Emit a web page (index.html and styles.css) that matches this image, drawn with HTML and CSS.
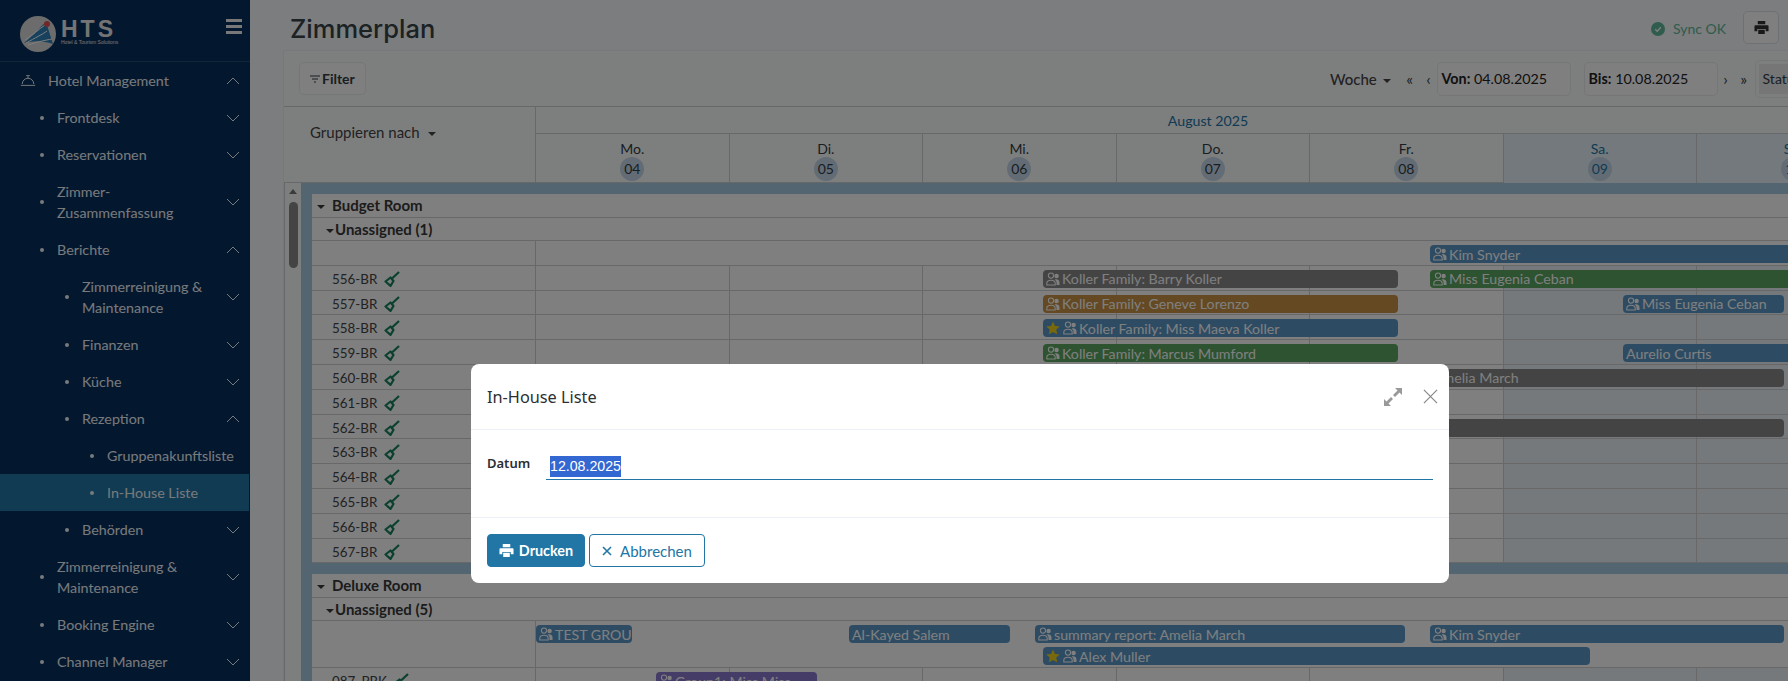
FILE: index.html
```html
<!DOCTYPE html>
<html lang="de">
<head>
    <meta charset="utf-8">
    <title>Zimmerplan</title>
    <link rel="stylesheet" href="styles.css">
</head>
<body>
    <svg class="icon-defs" width="0" height="0">
        <symbol id="chev-down" viewBox="0 0 14 8"><path d="M1 1l6 6 6-6" fill="none" stroke="currentColor"/></symbol>
        <symbol id="chev-up" viewBox="0 0 14 8"><path d="M1 7l6-6 6 6" fill="none" stroke="currentColor"/></symbol>
        <symbol id="guests" viewBox="0 0 14 14"><circle cx="5" cy="3.6" r="2.6" fill="none" stroke="currentColor" stroke-width="1.1"/><circle cx="10.6" cy="4" r="2.2" fill="currentColor"/><path d="M.8 13v-1.6C.8 9.400 2.400 8.200 5 8.200s4.200 1.200 4.200 3.200V13z" fill="none" stroke="currentColor" stroke-width="1.1"/><path d="M8.600 7.400c2.700-.5 4.900.6 4.900 3V13h-3v-2.500c0-1.200-.7-2.300-1.900-3.100z" fill="currentColor"/></symbol>
        <symbol id="star" viewBox="0 0 14 14"><path d="M7 .5l2 4.400 4.800.5-3.600 3.200 1 4.700L7 10.900l-4.200 2.400 1-4.700L.2 5.400 5 4.900z" fill="currentColor"/></symbol>
        <symbol id="broom" viewBox="0 0 16 16"><path d="M1.500 10.500l5-4 3 3.500-3 4.800z" fill="none" stroke="currentColor" stroke-width="2.200" stroke-linejoin="round"/><path d="M8 7.500L15 1" fill="none" stroke="currentColor" stroke-width="2.200"/></symbol>
        <symbol id="printer" viewBox="0 0 16 16"><path d="M4 1h8v3.500H4zM1.500 5.500h13a1 1 0 0 1 1 1V12h-3V9.500h-9V12h-3V6.500a1 1 0 0 1 1-1zM4.500 10.500h7V15h-7z" fill="currentColor"/></symbol>
    </svg>

    <div class="app">
        <!-- Sidebar -->
        <aside class="sidebar">
            <div class="brand">
                <svg class="brand-mark" viewBox="0 0 36 36">
                    <circle cx="18" cy="18" r="18" fill="#d8d8d8"/>
                    <path d="M4 27C14 19 20 11 26 6l7 22C22 24 12 25 4 27z" fill="#2f83b8"/>
                    <path d="M5 24C13 19 19 13 25 9M6 27c9-5 17-9 21-12M8 29c9-3 18-5 24-6" fill="none" stroke="#fff" stroke-width="1"/>
                    <circle cx="27" cy="8" r="3" fill="#e05050"/>
                </svg>
                <div class="brand-text">
                    <div class="brand-name">HTS</div>
                    <div class="brand-tag">Hotel &amp; Tourism Solutions</div>
                </div>
                <div class="burger"><span></span><span></span><span></span></div>
            </div>
            <nav class="nav">
                <div class="nav-item nav-top">
                    <svg class="bell" viewBox="0 0 18 14"><path d="M2.500 11a6.500 6.500 0 0 1 13 0M1 12.500h16M9 4.500V2M7 1.500h4" fill="none" stroke="currentColor" stroke-width="1.100"/></svg>
                    <span class="nav-label">Hotel Management</span>
                    <svg class="chev"><use href="#chev-up"/></svg>
                </div>
                <div class="nav-item lvl-1"><i class="dot"></i><span class="nav-label">Frontdesk</span><svg class="chev"><use href="#chev-down"/></svg></div>
                <div class="nav-item lvl-1"><i class="dot"></i><span class="nav-label">Reservationen</span><svg class="chev"><use href="#chev-down"/></svg></div>
                <div class="nav-item lvl-1"><i class="dot"></i><span class="nav-label">Zimmer-<br>Zusammenfassung</span><svg class="chev"><use href="#chev-down"/></svg></div>
                <div class="nav-item lvl-1"><i class="dot"></i><span class="nav-label">Berichte</span><svg class="chev"><use href="#chev-up"/></svg></div>
                <div class="nav-item lvl-2"><i class="dot"></i><span class="nav-label">Zimmerreinigung &amp;<br>Maintenance</span><svg class="chev"><use href="#chev-down"/></svg></div>
                <div class="nav-item lvl-2"><i class="dot"></i><span class="nav-label">Finanzen</span><svg class="chev"><use href="#chev-down"/></svg></div>
                <div class="nav-item lvl-2"><i class="dot"></i><span class="nav-label">Küche</span><svg class="chev"><use href="#chev-down"/></svg></div>
                <div class="nav-item lvl-2"><i class="dot"></i><span class="nav-label">Rezeption</span><svg class="chev"><use href="#chev-up"/></svg></div>
                <div class="nav-item lvl-3"><i class="dot"></i><span class="nav-label">Gruppenakunftsliste</span></div>
                <div class="nav-item lvl-3 active"><i class="dot"></i><span class="nav-label">In-House Liste</span></div>
                <div class="nav-item lvl-2"><i class="dot"></i><span class="nav-label">Behörden</span><svg class="chev"><use href="#chev-down"/></svg></div>
                <div class="nav-item lvl-1"><i class="dot"></i><span class="nav-label">Zimmerreinigung &amp;<br>Maintenance</span><svg class="chev"><use href="#chev-down"/></svg></div>
                <div class="nav-item lvl-1"><i class="dot"></i><span class="nav-label">Booking Engine</span><svg class="chev"><use href="#chev-down"/></svg></div>
                <div class="nav-item lvl-1"><i class="dot"></i><span class="nav-label">Channel Manager</span><svg class="chev"><use href="#chev-down"/></svg></div>
            </nav>
        </aside>

        <main class="main">
            <div class="page-head">
                <h1>Zimmerplan</h1>
                <div class="sync">
                    <svg class="sync-check" viewBox="0 0 14 14"><circle cx="7" cy="7" r="7" fill="#5fb89a"/><path d="M4.200 7.200l2 2 3.600-4" fill="none" stroke="#fff" stroke-width="1.300"/></svg>
                    <span>Sync OK</span>
                </div>
                <button class="print-btn"><svg><use href="#printer"/></svg></button>
            </div>

            <div class="card">
                <div class="toolbar">
                    <button class="filter-btn">
                        <svg class="filter-icon" viewBox="0 0 10 8"><path d="M0 1h10M2 4h6M4 7h2" stroke="currentColor" fill="none"/></svg>
                        Filter
                    </button>
                    <div class="range">
                        <span class="view-select">Woche <i class="caret"></i></span>
                        <span class="step step-first">«</span>
                        <span class="step">‹</span>
                        <div class="date-box"><b>Von:</b> 04.08.2025</div>
                        <div class="date-box date-to"><b>Bis:</b> 10.08.2025</div>
                        <span class="step step-next">›</span>
                        <span class="step">»</span>
                        <div class="status-box"><span>Status</span></div>
                    </div>
                </div>

                <div class="plan-head">
                    <div class="group-by">Gruppieren nach <i class="caret"></i></div>
                    <div class="dates">
                        <div class="month"><span>August 2025</span></div>
                        <div class="days">
                            <div class="day"><span>Mo.</span><em>04</em></div>
                            <div class="day"><span>Di.</span><em>05</em></div>
                            <div class="day"><span>Mi.</span><em>06</em></div>
                            <div class="day"><span>Do.</span><em>07</em></div>
                            <div class="day"><span>Fr.</span><em>08</em></div>
                            <div class="day weekend"><span>Sa.</span><em>09</em></div>
                            <div class="day weekend"><span>So.</span><em>10</em></div>
                        </div>
                    </div>
                </div>

                <div class="plan-body">
                    <div class="scroll-track">
                        <i class="scroll-arrow"></i>
                        <i class="scroll-thumb"></i>
                    </div>
                    <div class="groups">
                        <section class="room-group">
                            <div class="group-title"><i class="caret"></i>Budget Room</div>
                            <div class="sub-title"><i class="caret"></i>Unassigned (1)</div>
                            <div class="row">
                                <div class="room"></div>
                                <div class="timeline">
                                    <div class="event blue" style="left:894px;width:400px"><svg><use href="#guests"/></svg>Kim Snyder</div>
                                </div>
                            </div>
                            <div class="row">
                                <div class="room">556-BR <svg class="broom"><use href="#broom"/></svg></div>
                                <div class="timeline days-grid">
                                    <i></i><i></i><i></i><i></i><i></i><i class="we"></i><i class="we"></i>
                                    <div class="event grey" style="left:507px;width:355px"><svg><use href="#guests"/></svg>Koller Family: Barry Koller</div>
                                    <div class="event green" style="left:894px;width:400px"><svg><use href="#guests"/></svg>Miss Eugenia Ceban</div>
                                </div>
                            </div>
                            <div class="row">
                                <div class="room">557-BR <svg class="broom"><use href="#broom"/></svg></div>
                                <div class="timeline days-grid">
                                    <i></i><i></i><i></i><i></i><i></i><i class="we"></i><i class="we"></i>
                                    <div class="event orange" style="left:507px;width:355px"><svg><use href="#guests"/></svg>Koller Family: Geneve Lorenzo</div>
                                    <div class="event blue" style="left:1087px;width:161px"><svg><use href="#guests"/></svg>Miss Eugenia Ceban</div>
                                </div>
                            </div>
                            <div class="row">
                                <div class="room">558-BR <svg class="broom"><use href="#broom"/></svg></div>
                                <div class="timeline days-grid">
                                    <i></i><i></i><i></i><i></i><i></i><i class="we"></i><i class="we"></i>
                                    <div class="event blue" style="left:507px;width:355px"><svg class="vip"><use href="#star"/></svg><svg><use href="#guests"/></svg>Koller Family: Miss Maeva Koller</div>
                                </div>
                            </div>
                            <div class="row">
                                <div class="room">559-BR <svg class="broom"><use href="#broom"/></svg></div>
                                <div class="timeline days-grid">
                                    <i></i><i></i><i></i><i></i><i></i><i class="we"></i><i class="we"></i>
                                    <div class="event green" style="left:507px;width:355px"><svg><use href="#guests"/></svg>Koller Family: Marcus Mumford</div>
                                    <div class="event blue" style="left:1087px;width:300px">Aurelio Curtis</div>
                                </div>
                            </div>
                            <div class="row">
                                <div class="room">560-BR <svg class="broom"><use href="#broom"/></svg></div>
                                <div class="timeline days-grid">
                                    <i></i><i></i><i></i><i></i><i></i><i class="we"></i><i class="we"></i>
                                    <div class="event grey" style="left:894px;width:354px">Amelia March</div>
                                </div>
                            </div>
                            <div class="row">
                                <div class="room">561-BR <svg class="broom"><use href="#broom"/></svg></div>
                                <div class="timeline days-grid"><i></i><i></i><i></i><i></i><i></i><i class="we"></i><i class="we"></i></div>
                            </div>
                            <div class="row">
                                <div class="room">562-BR <svg class="broom"><use href="#broom"/></svg></div>
                                <div class="timeline days-grid">
                                    <i></i><i></i><i></i><i></i><i></i><i class="we"></i><i class="we"></i>
                                    <div class="event grey" style="left:700px;width:548px"></div>
                                </div>
                            </div>
                            <div class="row">
                                <div class="room">563-BR <svg class="broom"><use href="#broom"/></svg></div>
                                <div class="timeline days-grid"><i></i><i></i><i></i><i></i><i></i><i class="we"></i><i class="we"></i></div>
                            </div>
                            <div class="row">
                                <div class="room">564-BR <svg class="broom"><use href="#broom"/></svg></div>
                                <div class="timeline days-grid"><i></i><i></i><i></i><i></i><i></i><i class="we"></i><i class="we"></i></div>
                            </div>
                            <div class="row">
                                <div class="room">565-BR <svg class="broom"><use href="#broom"/></svg></div>
                                <div class="timeline days-grid"><i></i><i></i><i></i><i></i><i></i><i class="we"></i><i class="we"></i></div>
                            </div>
                            <div class="row">
                                <div class="room">566-BR <svg class="broom"><use href="#broom"/></svg></div>
                                <div class="timeline days-grid"><i></i><i></i><i></i><i></i><i></i><i class="we"></i><i class="we"></i></div>
                            </div>
                            <div class="row">
                                <div class="room">567-BR <svg class="broom"><use href="#broom"/></svg></div>
                                <div class="timeline days-grid"><i></i><i></i><i></i><i></i><i></i><i class="we"></i><i class="we"></i></div>
                            </div>
                        </section>

                        <section class="room-group">
                            <div class="group-title"><i class="caret"></i>Deluxe Room</div>
                            <div class="sub-title"><i class="caret"></i>Unassigned (5)</div>
                            <div class="row row-double">
                                <div class="room"></div>
                                <div class="timeline">
                                    <div class="event blue" style="left:0;width:96px"><svg><use href="#guests"/></svg>TEST GROUP</div>
                                    <div class="event blue" style="left:313px;width:161px">Al-Kayed Salem</div>
                                    <div class="event blue" style="left:499px;width:370px"><svg><use href="#guests"/></svg>summary report: Amelia March</div>
                                    <div class="event blue" style="left:894px;width:354px"><svg><use href="#guests"/></svg>Kim Snyder</div>
                                    <div class="event blue lower" style="left:507px;width:547px"><svg class="vip"><use href="#star"/></svg><svg><use href="#guests"/></svg>Alex Muller</div>
                                </div>
                            </div>
                            <div class="row">
                                <div class="room">087_PRK <svg class="broom"><use href="#broom"/></svg></div>
                                <div class="timeline days-grid">
                                    <i></i><i></i><i></i><i></i><i></i><i class="we"></i><i class="we"></i>
                                    <div class="event purple" style="left:120px;width:161px"><svg><use href="#guests"/></svg>Group1: Miss Miss</div>
                                </div>
                            </div>
                        </section>
                    </div>
                </div>
            </div>
        </main>
    </div>

    <!-- In-House Liste dialog -->
    <div class="backdrop">
        <div class="modal">
            <div class="modal-head">
                <h2>In-House Liste</h2>
                <svg class="modal-expand" viewBox="0 0 20 20"><path d="M12 1h7v7l-2.500-2.500L12 10 10 8l4.500-4.500zM8 19H1v-7l2.500 2.500L8 10l2 2-4.500 4.500z" fill="currentColor"/></svg>
                <svg class="modal-close" viewBox="0 0 16 16"><path d="M1 1l14 14M15 1L1 15" fill="none" stroke="currentColor" stroke-width="1.300"/></svg>
            </div>
            <div class="modal-body">
                <label class="field-label">Datum</label>
                <div class="field-input"><span class="selected">12.08.2025</span></div>
            </div>
            <div class="modal-foot">
                <button class="btn-primary"><svg><use href="#printer"/></svg>Drucken</button>
                <button class="btn-outline"><svg viewBox="0 0 10 10"><path d="M1 1l8 8M9 1L1 9" fill="none" stroke="currentColor" stroke-width="1.600"/></svg>Abbrechen</button>
            </div>
        </div>
    </div>
</body>
</html>
```

FILE: styles.css
```css
* {
    box-sizing: border-box;
}
html, body {
    height: 100%;
}
body {
    margin: 0;
    overflow: hidden;
    background-color: #f6fafd;
    color: #333c44;
    font-family: Lato, Roboto, sans-serif;
    font-size: 14px;
}
button {
    font-family: inherit;
    cursor: pointer;
}
.icon-defs {
    position: absolute;
}
.app {
    display: flex;
    height: 100vh;
    overflow: hidden;
}

/* Sidebar */
.sidebar {
    flex: 0 0 250px;
    background-color: #062f5e;
    color: #f0f4f8;
    font-size: 14.3px;
}
.brand {
    display: flex;
    align-items: flex-start;
    height: 62px;
    padding: 16px 8px 0 20px;
    border-bottom: 1px solid #2b4a70;
}
.brand-mark {
    width: 36px;
    height: 36px;
    flex: none;
}
.brand-text {
    margin: 5px 0 0 5px;
    width: 56px;
}
.brand-name {
    font-family: "Liberation Sans", sans-serif;
    font-size: 23px;
    font-weight: 700;
    line-height: 17px;
    letter-spacing: 3px;
    color: #e8e8e8;
}
.brand-tag {
    margin-top: 1px;
    font-family: "Liberation Sans", sans-serif;
    font-size: 5px;
    line-height: 7px;
    white-space: nowrap;
    color: #e8e8e8;
}
.burger {
    display: flex;
    flex-direction: column;
    gap: 3px;
    width: 16px;
    margin: 3px 0 0 auto;
}
.burger span {
    height: 3px;
    background-color: #f0f0f0;
}
.nav-item {
    display: flex;
    align-items: center;
    min-height: 37px;
    padding: 8px 10px 8px 0;
    line-height: 21px;
}
.nav-label {
    flex: 1;
}
.nav-top {
    padding-left: 20px;
}
.bell {
    width: 16px;
    height: 13px;
    margin-right: 12px;
}
.dot {
    flex: none;
    width: 4px;
    height: 4px;
    margin-right: 13px;
    border-radius: 50%;
    background-color: #f0f4f8;
}
.lvl-1 {
    padding-left: 40px;
}
.lvl-2 {
    padding-left: 65px;
}
.lvl-3 {
    padding-left: 90px;
}
.active {
    width: 249px;
    background-color: #2176a5;
}
.chev {
    flex: none;
    width: 14px;
    height: 8px;
}

/* Page head */
.main {
    flex: 1;
    min-width: 0;
    padding-left: 33px;
}
.page-head {
    display: flex;
    align-items: center;
    height: 50px;
    padding: 4px 9px 0 7px;
}
h1 {
    margin: 3px 0 0;
    font-family: Inter, sans-serif;
    font-size: 25.5px;
    font-weight: 500;
    color: #394249;
}
.sync {
    display: flex;
    align-items: center;
    gap: 8px;
    margin: 3px 0 0 auto;
    color: #5fb89a;
}
.sync-check {
    width: 14px;
    height: 14px;
}
.print-btn {
    display: flex;
    align-items: center;
    justify-content: center;
    width: 36px;
    height: 33px;
    margin-left: 17px;
    border: 1px solid #dde3e8;
    border-radius: 5px;
    background-color: #fff;
    color: #333;
}
.print-btn svg {
    width: 15px;
    height: 15px;
}

/* Toolbar */
.card {
    width: 1700px;
    border: 1px solid #edf1f4;
    border-right: 0;
    background-color: #fbfcfd;
}
.toolbar {
    display: flex;
    align-items: center;
    height: 55px;
    padding-left: 15px;
}
.filter-btn {
    display: flex;
    align-items: center;
    gap: 2px;
    width: 67px;
    height: 33px;
    padding: 0 0 0 10px;
    border: 1px solid #e8edf1;
    border-radius: 5px;
    background-color: #fff;
    color: #333c44;
    font-size: 14px;
    font-weight: 700;
}
.filter-icon {
    width: 10px;
    height: 8px;
}
.range {
    display: flex;
    align-items: center;
    margin-left: 964px;
}
.view-select {
    margin-right: 10px;
    color: #444;
    font-size: 15px;
    font-weight: 500;
}
.caret {
    display: inline-block;
    margin: 0 3px 2px 2px;
    border-style: solid;
    border-width: 4px 4px 0;
    border-color: currentColor transparent transparent;
}
.step {
    width: 12px;
    margin-right: 5px;
    text-align: center;
    font-size: 16px;
}
.step-first {
    margin-right: 7px;
}
.step + .date-box {
    margin-left: -3px;
}
.date-box {
    width: 134px;
    height: 34px;
    padding-left: 4px;
    border: 1px solid #e8edf1;
    border-radius: 5px;
    background-color: #fff;
    color: #222;
    font-size: 14.3px;
    line-height: 32px;
}
.date-box b {
    font-weight: 700;
}
.date-to {
    margin: 0 2px 0 13px;
}
.step-next {
    margin-right: 6px;
}
.status-box {
    width: 120px;
    height: 38px;
    padding: 3px;
    border: 1px solid #e8edf1;
    border-radius: 5px;
}
.status-box span {
    display: block;
    height: 30px;
    padding-left: 4px;
    background-color: #ececec;
    line-height: 30px;
}

/* Plan head */
.plan-head {
    display: flex;
    height: 77px;
    border-top: 1px solid #ccd0d4;
    border-bottom: 1px solid #ccd0d4;
}
.group-by {
    flex: 0 0 252px;
    padding: 16px 0 0 26px;
    border-right: 1px solid #ccd0d4;
    color: #444;
    font-size: 15px;
}
.group-by .caret {
    margin-left: 5px;
}
.month {
    height: 27px;
    border-bottom: 1px solid #ccd0d4;
    color: #2176a5;
    line-height: 27px;
    font-size: 14.2px;
}
.month span {
    display: block;
    width: 1344px;
    text-align: center;
}
.days {
    display: flex;
}
.day {
    display: flex;
    flex-direction: column;
    align-items: center;
    width: 193.5px;
    height: 49px;
    padding-top: 6px;
    border-right: 1px solid #ccd0d4;
    font-size: 14px;
    line-height: 17px;
}
.day em {
    width: 24px;
    height: 24px;
    border-radius: 50%;
    background-color: #c6d9ea;
    font-style: normal;
    text-align: center;
    line-height: 24px;
}
.weekend {
    background-color: #e6f2f8;
    color: #2176a5;
}

/* Plan body */
.plan-body {
    display: flex;
}
.scroll-track {
    flex: 0 0 17px;
    padding-top: 6px;
    border-left: 1px solid #ccd0d4;
}
.scroll-arrow {
    display: block;
    width: 0;
    margin: 0 auto 8px;
    border-style: solid;
    border-width: 0 4px 5px;
    border-color: transparent transparent #777;
}
.scroll-thumb {
    display: block;
    width: 9px;
    height: 66px;
    margin: 0 auto;
    border-radius: 5px;
    background-color: #888;
}
.groups {
    flex: 1;
    min-width: 0;
}
.room-group {
    border-top: 11px solid #a6cae0;
    border-left: 11px solid #a6cae0;
    background-color: #fff;
}
.group-title, .sub-title {
    height: 23.5px;
    border-bottom: 1px solid #d0d0d0;
    font-size: 15px;
    font-weight: 700;
    line-height: 23px;
    color: #383838;
}
.group-title {
    padding-left: 3px;
}
.group-title .caret {
    margin-right: 7px;
}
.sub-title {
    padding-left: 12px;
}
.sub-title .caret {
    margin-right: 1px;
}
.row {
    display: flex;
    height: 24.8px;
    border-bottom: 1px solid #d0d0d0;
}
.row-double {
    height: 47px;
}
.room {
    flex: 0 0 224px;
    padding-left: 20px;
    border-right: 1px solid #d0d0d0;
    font-size: 13.4px;
    line-height: 26px;
    color: #444;
}
.broom {
    width: 16px;
    height: 16px;
    margin-left: 3px;
    vertical-align: -3px;
    color: #17825c;
}
.timeline {
    position: relative;
    flex: 1;
    min-width: 0;
}
.days-grid {
    display: flex;
}
.days-grid i {
    flex: 0 0 193.5px;
    border-right: 1px solid #d0d0d0;
}
.days-grid .we {
    background-color: #eaf3f8;
}

/* Reservation bars lie over the day cells */
.event {
    position: absolute;
    top: 4px;
    display: flex;
    align-items: center;
    gap: 2px;
    height: 18px;
    padding-left: 3px;
    overflow: hidden;
    border-radius: 4px;
    color: #fff;
    font-size: 14.2px;
    white-space: nowrap;
}
.event svg {
    flex: none;
    width: 14px;
    height: 14px;
}
.event .vip {
    margin-right: 1px;
    color: #f2d21a;
}
.lower {
    top: 26px;
}
.blue { background-color: #5a98c8; }
.grey { background-color: #888; }
.green { background-color: #5aa660; }
.orange { background-color: #c89246; }
.purple { background-color: #8c78d0; }

/* Dialog */
.backdrop {
    position: fixed;
    top: 0;
    right: 0;
    bottom: 0;
    left: 0;
    padding: 364px 0 0 471px;
    background-color: rgba(0,0,0,0.5);
}
.modal {
    width: 978px;
    height: 219px;
    border-radius: 8px;
    background-color: #fff;
    font-family: "Noto Sans", sans-serif;
}
.modal-head {
    display: flex;
    align-items: center;
    height: 66px;
    padding: 0 11px 0 16px;
    border-bottom: 1px solid #eaf0f6;
}
h2 {
    flex: 1;
    margin: 0;
    font-size: 16.3px;
    font-weight: 400;
    color: #2b2f33;
}
.modal-expand {
    width: 20px;
    height: 20px;
    color: #999;
}
.modal-close {
    width: 15px;
    height: 15px;
    margin-left: 20px;
    color: #888;
}
.modal-body {
    display: flex;
    align-items: flex-start;
    height: 88px;
    padding: 21px 16px 0;
    border-bottom: 1px solid #eaf0f6;
}
.field-label {
    flex: 0 0 59px;
    padding-top: 3px;
    font-size: 13px;
    font-weight: 600;
    color: #2b2f33;
}
.field-input {
    flex: 1;
    height: 29px;
    padding: 5px 4px 0;
    border-bottom: 1px solid #2176a5;
    font-family: "Liberation Sans", sans-serif;
    font-size: 14.2px;
    line-height: 21px;
}
.selected {
    display: inline-block;
    background-color: #3367d1;
    color: #fff;
}
.modal-foot {
    display: flex;
    gap: 4px;
    padding: 16px;
}
.modal-foot button {
    display: flex;
    align-items: center;
    justify-content: center;
    height: 33px;
    border-radius: 4px;
    font-family: Lato, sans-serif;
}
.btn-primary {
    width: 98px;
    border: 1px solid #2176a5;
    background-color: #2176a5;
    color: #fff;
    font-size: 14.4px;
    font-weight: 700;
    gap: 5px;
}
.btn-primary svg {
    width: 15px;
    height: 15px;
}
.btn-outline {
    width: 116px;
    border: 1px solid #2176a5;
    background-color: #fff;
    color: #2176a5;
    font-size: 15px;
    gap: 8px;
}
.btn-outline svg {
    width: 10px;
    height: 10px;
}
```
